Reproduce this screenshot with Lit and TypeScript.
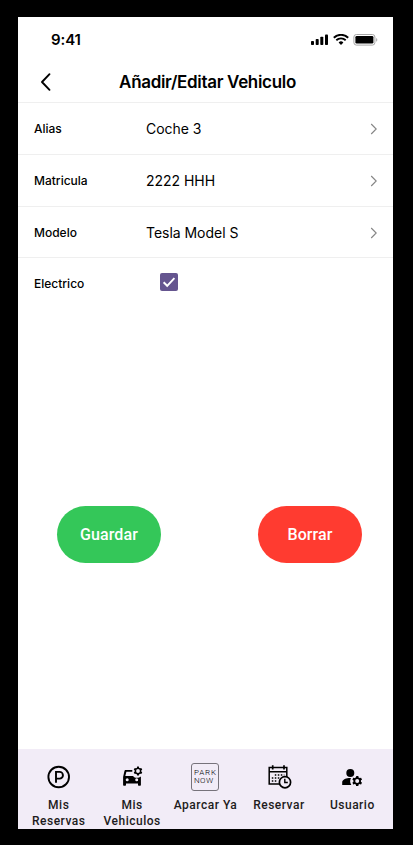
import { LitElement, html, css, svg } from "lit";
import { customElement, state } from "lit/decorators.js";

const gear = (cx: number, cy: number, r: number, hole: number) => {
  const ring = r * 0.76;
  const width = ring - hole;
  const mid = (ring + hole) / 2;
  const teeth = [0, 60, 120, 180, 240, 300].map(
    (a) => svg`<rect x=${cx - r * 0.24} y=${cy - r} width=${r * 0.48} height=${r - mid} rx="0.3" transform="rotate(${a} ${cx} ${cy})"/>`
  );
  return svg`<circle cx=${cx} cy=${cy} r=${mid} fill="none" stroke="#000" stroke-width=${width}/>${teeth}`;
};

const parking = html`<svg width="28" height="28" viewBox="0 0 28 28" fill="none" stroke="#000">
  <circle cx="13.700" cy="14" r="10.300" stroke-width="1.900"/>
  <path d="M11 19.800V8.900h3.600a3.350 3.350 0 0 1 0 6.700H11" stroke-width="1.900"/>
</svg>`;

const car = html`<svg width="28" height="28" viewBox="0 0 28 28">
  <path fill-rule="evenodd" d="M7.600 7h6.700v1.800H8.400L7.300 12.900h7.700c.9 1.200 2.300 1.900 4 1.900 1.400 0 2.800-.5 3.900-1.300v8.200c0 .6-.4 1-1 1h-.9c-.6 0-1-.4-1-1v-1.200H8v1.200c0 .6-.4 1-1 1h-.9c-.6 0-1-.4-1-1v-7.700l1.300-5.700C6.600 7.500 7 7 7.600 7zM9.200 15.200a1.500 1.500 0 1 0 0 3a1.500 1.500 0 1 0 0-3zM18.700 15.200a1.500 1.500 0 1 0 0 3a1.500 1.500 0 1 0 0-3z"/>
  ${gear(20, 8, 4.4, 1.9)}
</svg>`;

const calendar = html`<svg width="28" height="28" viewBox="0 0 28 28" fill="none" stroke="#000" stroke-width="1.500">
  <path d="M15 21H4.200V4.500h17.600V14M4.200 8.800h17.600"/>
  <path d="M7.700 2.200v4.200M19 2.200v4.200" stroke-width="1.700"/>
  <path d="M9.800 12h9.500M6.800 15h9M6.800 18h6" stroke-width="1.500" stroke-dasharray="1.500 1.500"/>
  <circle cx="20" cy="19.200" r="5.600" fill="#f2ecf7" stroke-width="1.700"/>
  <path d="M19.800 15.800v3.700h3" stroke-width="1.400"/>
</svg>`;

const user = html`<svg width="28" height="28" viewBox="0 0 28 28">
  <circle cx="12.300" cy="9.900" r="4"/>
  <path d="M13 15.100a7 7 0 0 0 .3 6.900H4.200v-2.700c0-2.900 4.800-4.400 8.800-4.200z"/>
  ${gear(19.200, 18.100, 5, 2)}
</svg>`;

@customElement("app-root")
export class AppRoot extends LitElement {
  @state() private electric = true;

  private fields = [
    { label: "Alias", value: "Coche 3" },
    { label: "Matricula", value: "2222 HHH" },
    { label: "Modelo", value: "Tesla Model S" },
  ];

  private tabs = [
    { label: "Mis Reservas", icon: parking },
    { label: "Mis Vehiculos", icon: car },
    { label: "Aparcar Ya", icon: html`<span class="logo"><span>PARK</span><span>NOW</span></span>` },
    { label: "Reservar", icon: calendar },
    { label: "Usuario", icon: user },
  ];

  static styles = css`
    :host { display: block; box-sizing: border-box; height: 845px; padding: 17px 20px 16px 18px; background: #000; color: #000; font-family: Inter, sans-serif; overflow: hidden; }
    * { box-sizing: border-box; }
    svg { display: block; flex: none; }
    button { border: 0; padding: 0; margin: 0; background: none; color: inherit; font: inherit; }
    .screen { width: 375px; height: 812px; background: #fff; display: flex; flex-direction: column; }
    .status { height: 44px; padding: 1px 15px 0 33px; display: flex; align-items: center; justify-content: space-between; }
    .time { font-size: 15px; font-weight: 600; line-height: 20px; padding-top: 1px; letter-spacing: -0.1px; }
    .header { height: 42px; display: grid; grid-template-columns: 55px 1fr 51px; align-items: center; border-bottom: 1px solid #efefef; }
    .back { padding-left: 21px; }
    h1 { margin: 0; text-align: center; font-size: 17px; font-weight: 600; line-height: 22px; letter-spacing: -0.32px; white-space: nowrap; }
    .row { height: 52px; padding: 0 15px 0 16px; display: grid; grid-template-columns: 112px 1fr auto; align-items: center; border-bottom: 1px solid #efefef; }
    .row:nth-child(3) { height: 51px; padding-top: 1px; }
    .row.last { height: 50px; border: 0; }
    .label { font-size: 12px; font-weight: 500; }
    .value { font-size: 14px; letter-spacing: -0.03px; }
    .check { width: 18px; height: 18px; margin: 0 0 3px 14px; border-radius: 2px; background: #65558f; }
    .actions { margin-top: 198px; padding: 0 31px 0 39px; display: flex; justify-content: space-between; }
    .action { width: 104px; height: 57px; border-radius: 29px; color: #fff; font: 500 16px/24px Roboto, sans-serif; letter-spacing: 0.1px; }
    .save { background: #34c759; }
    .delete { background: #ff3b30; }
    nav { height: 80px; margin-top: auto; padding: 14px 8px 0; display: flex; gap: 8px; background: #f2ecf7; }
    .tab { flex: 1 1 0; min-width: 0; display: flex; flex-direction: column; align-items: center; gap: 6px; }
    .tab-label { width: 72px; text-align: center; font: 500 12px/16px Roboto, sans-serif; letter-spacing: 0.5px; color: #1d1b20; }
    .logo { width: 28px; height: 28px; margin-right: 1px; border: 1px solid #77737b; border-radius: 3px; padding: 5px 0 0 2px; display: flex; flex-direction: column; font: 300 8px/8px Roboto, sans-serif; letter-spacing: 0.8px; white-space: nowrap; }
    .logo span + span { letter-spacing: 0.4px; }
  `;

  render() {
    return html`<div class="screen">
      <div class="status">
        <span class="time">9:41</span>
        <svg width="67" height="12" viewBox="0 0 67 12">
          <rect y="7" width="3" height="4" rx=".8"/><rect x="4.700" y="5" width="3" height="6" rx=".8"/><rect x="9.300" y="2.700" width="3" height="8.300" rx=".8"/><rect x="14" y=".4" width="3" height="10.600" rx=".8"/>
          <path d="M22.800 3.700a10.400 10.400 0 0 1 14.400 0M25.300 6.300a6.800 6.800 0 0 1 9.400 0" fill="none" stroke="#000" stroke-width="1.900"/>
          <path d="M27.600 8.500a3.500 3.500 0 0 1 4.800 0L30 11z"/>
          <rect x="42.900" y=".5" width="21" height="10.600" rx="2.500" fill="none" stroke="#a6a6a6"/>
          <rect x="44.400" y="2" width="18" height="7.600" rx="1.300"/>
          <path d="M65.200 4v3.700c1.500-.6 1.500-3.100 0-3.700z" fill="#a6a6a6"/>
        </svg>
      </div>
      <header class="header">
        <button class="back" aria-label="Volver"><svg width="14" height="20" viewBox="0 0 14 20"><path d="M10.500 2.200 3 10l7.500 7.800" fill="none" stroke="#000" stroke-width="1.900" stroke-linecap="round" stroke-linejoin="round"/></svg></button>
        <h1>Añadir/Editar Vehiculo</h1>
      </header>
      <div class="form">
        ${this.fields.map((f) => html`<div class="row">
          <span class="label">${f.label}</span><span class="value">${f.value}</span>
          <svg width="8" height="12" viewBox="0 0 8 12"><path d="M1.200 1 6.200 6l-5 5" fill="none" stroke="#858585" stroke-width="1.100"/></svg>
        </div>`)}
        <div class="row last">
          <span class="label">Electrico</span>
          <button class="check" role="checkbox" aria-checked=${this.electric} aria-label="Electrico" @click=${() => (this.electric = !this.electric)}>
            ${this.electric ? html`<svg width="18" height="18" viewBox="0 0 18 18"><path d="m3.600 9.300 3.600 3.500 7.200-7.700" fill="none" stroke="#fff" stroke-width="1.900"/></svg>` : ""}
          </button>
        </div>
      </div>
      <div class="actions">
        <button class="action save">Guardar</button>
        <button class="action delete">Borrar</button>
      </div>
      <nav>
        ${this.tabs.map((t) => html`<div class="tab">${t.icon}<span class="tab-label">${t.label}</span></div>`)}
      </nav>
    </div>`;
  }
}
